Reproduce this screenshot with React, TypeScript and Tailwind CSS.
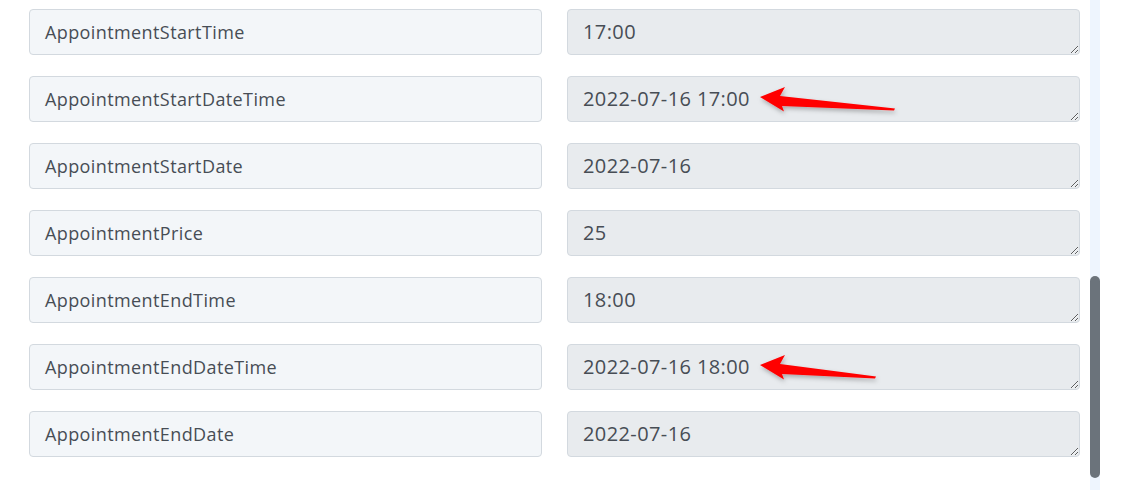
import React from "react";

const rows = [
  { name: "AppointmentStartTime", value: "17:00" },
  { name: "AppointmentStartDateTime", value: "2022-07-16 17:00", arrow: 138 },
  { name: "AppointmentStartDate", value: "2022-07-16" },
  { name: "AppointmentPrice", value: "25" },
  { name: "AppointmentEndTime", value: "18:00" },
  { name: "AppointmentEndDateTime", value: "2022-07-16 18:00", arrow: 119 },
  { name: "AppointmentEndDate", value: "2022-07-16" },
];

function Arrow({ tail }: { tail: number }) {
  // tip just after the value text, wedge-shaped tail running right and slightly down
  const id = `shadow-${tail}`;
  return (
    <svg
      className="absolute left-[190px] top-[8px] pointer-events-none overflow-visible"
      width={tail + 6}
      height={34}
      viewBox={`0 0 ${tail + 6} 34`}
    >
      <defs>
        <filter id={id} x="-10%" y="-50%" width="125%" height="220%">
          <feDropShadow dx="1" dy="2.5" stdDeviation="2" floodColor="#000" floodOpacity="0.28" />
        </filter>
      </defs>
      <path
        d={`M3 13 L28 3 L23 12 L${tail} 24.5 L${tail - 1} 26.5 L25 22 L27 27.5 Z`}
        fill="#ff0000"
        strokeLinejoin="round"
        filter={`url(#${id})`}
      />
    </svg>
  );
}

export default function App() {
  return (
    <div
      className="w-[1130px] h-[490px] bg-white flex overflow-hidden"
      style={{ fontFamily: "'Open Sans', 'Liberation Sans', sans-serif" }}
    >
      <div className="w-[1090px] pl-[29px] pr-[10px] pt-[9px] flex flex-col gap-[21px]">
        {rows.map((r) => (
          <div key={r.name} className="flex gap-[25px] h-[46px]">
            <div className="w-[513px] h-[46px] shrink-0 bg-[#f3f6f9] border border-[#d3d9df] rounded-[4px] px-[15px] flex items-center text-[18px] tracking-[0.4px] text-[#474d55]">
              {r.name}
            </div>
            <div className="relative w-[513px] h-[46px] shrink-0">
              <textarea
                readOnly
                value={r.value}
                className="block w-full h-[46px] resize-y bg-[#e8ebee] border border-[#d3d9df] rounded-[4px] px-[15px] pt-[8px] text-[20px] leading-[28px] tracking-[0.4px] text-[#474d55] outline-none overflow-hidden"
              />
              {r.arrow && <Arrow tail={r.arrow} />}
            </div>
          </div>
        ))}
      </div>
      <div className="w-[10px] h-full bg-[#eef5fe] flex flex-col">
        <div className="h-[276px]" />
        <div className="h-[202px] bg-[#6b737b] rounded-full" />
      </div>
    </div>
  );
}
